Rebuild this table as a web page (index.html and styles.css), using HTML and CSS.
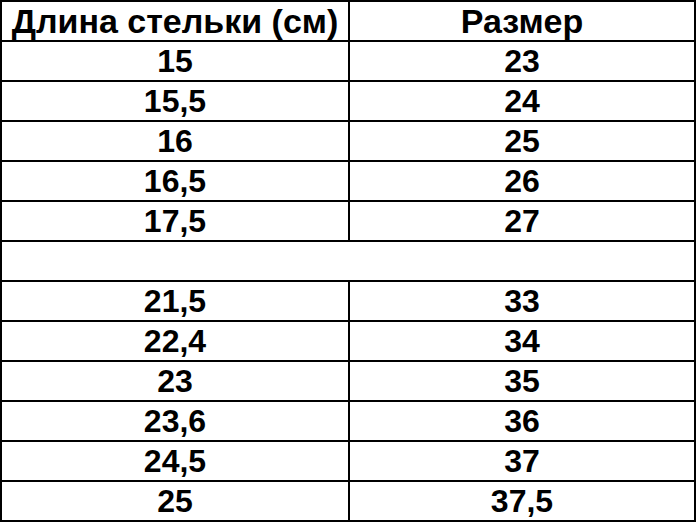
FILE: index.html
```html
<!DOCTYPE html>
<html lang="ru">
<head>
<meta charset="utf-8">
<title>Размеры</title>
<link rel="stylesheet" href="styles.css">
</head>
<body>
<div class="table">
  <div class="cell head">Длина стельки (см)</div><div class="cell head">Размер</div>
  <div class="cell">15</div><div class="cell">23</div>
  <div class="cell">15,5</div><div class="cell">24</div>
  <div class="cell">16</div><div class="cell">25</div>
  <div class="cell">16,5</div><div class="cell">26</div>
  <div class="cell">17,5</div><div class="cell">27</div>
  <div class="cell wide"></div>
  <div class="cell">21,5</div><div class="cell">33</div>
  <div class="cell">22,4</div><div class="cell">34</div>
  <div class="cell">23</div><div class="cell">35</div>
  <div class="cell">23,6</div><div class="cell">36</div>
  <div class="cell">24,5</div><div class="cell">37</div>
  <div class="cell">25</div><div class="cell">37,5</div>
</div>
</body>
</html>
```
FILE: styles.css
```css
html, body {
  margin: 0;
  padding: 0;
  background: #fff;
}
.table {
  display: grid;
  grid-template-columns: 348px 346px;
  grid-auto-rows: 40px;
  width: 696px;
  box-sizing: border-box;
  border-top: 2px solid #000;
  border-left: 2px solid #000;
  font-family: "Liberation Sans", Arial, sans-serif;
  font-weight: bold;
  font-size: 32px;
  color: #000;
}
.cell {
  box-sizing: border-box;
  border-right: 2px solid #000;
  border-bottom: 2px solid #000;
  display: flex;
  align-items: center;
  justify-content: center;
  line-height: 1;
  white-space: nowrap;
}
.head {
  font-size: 34px;
}
.wide {
  grid-column: span 2;
}
```
